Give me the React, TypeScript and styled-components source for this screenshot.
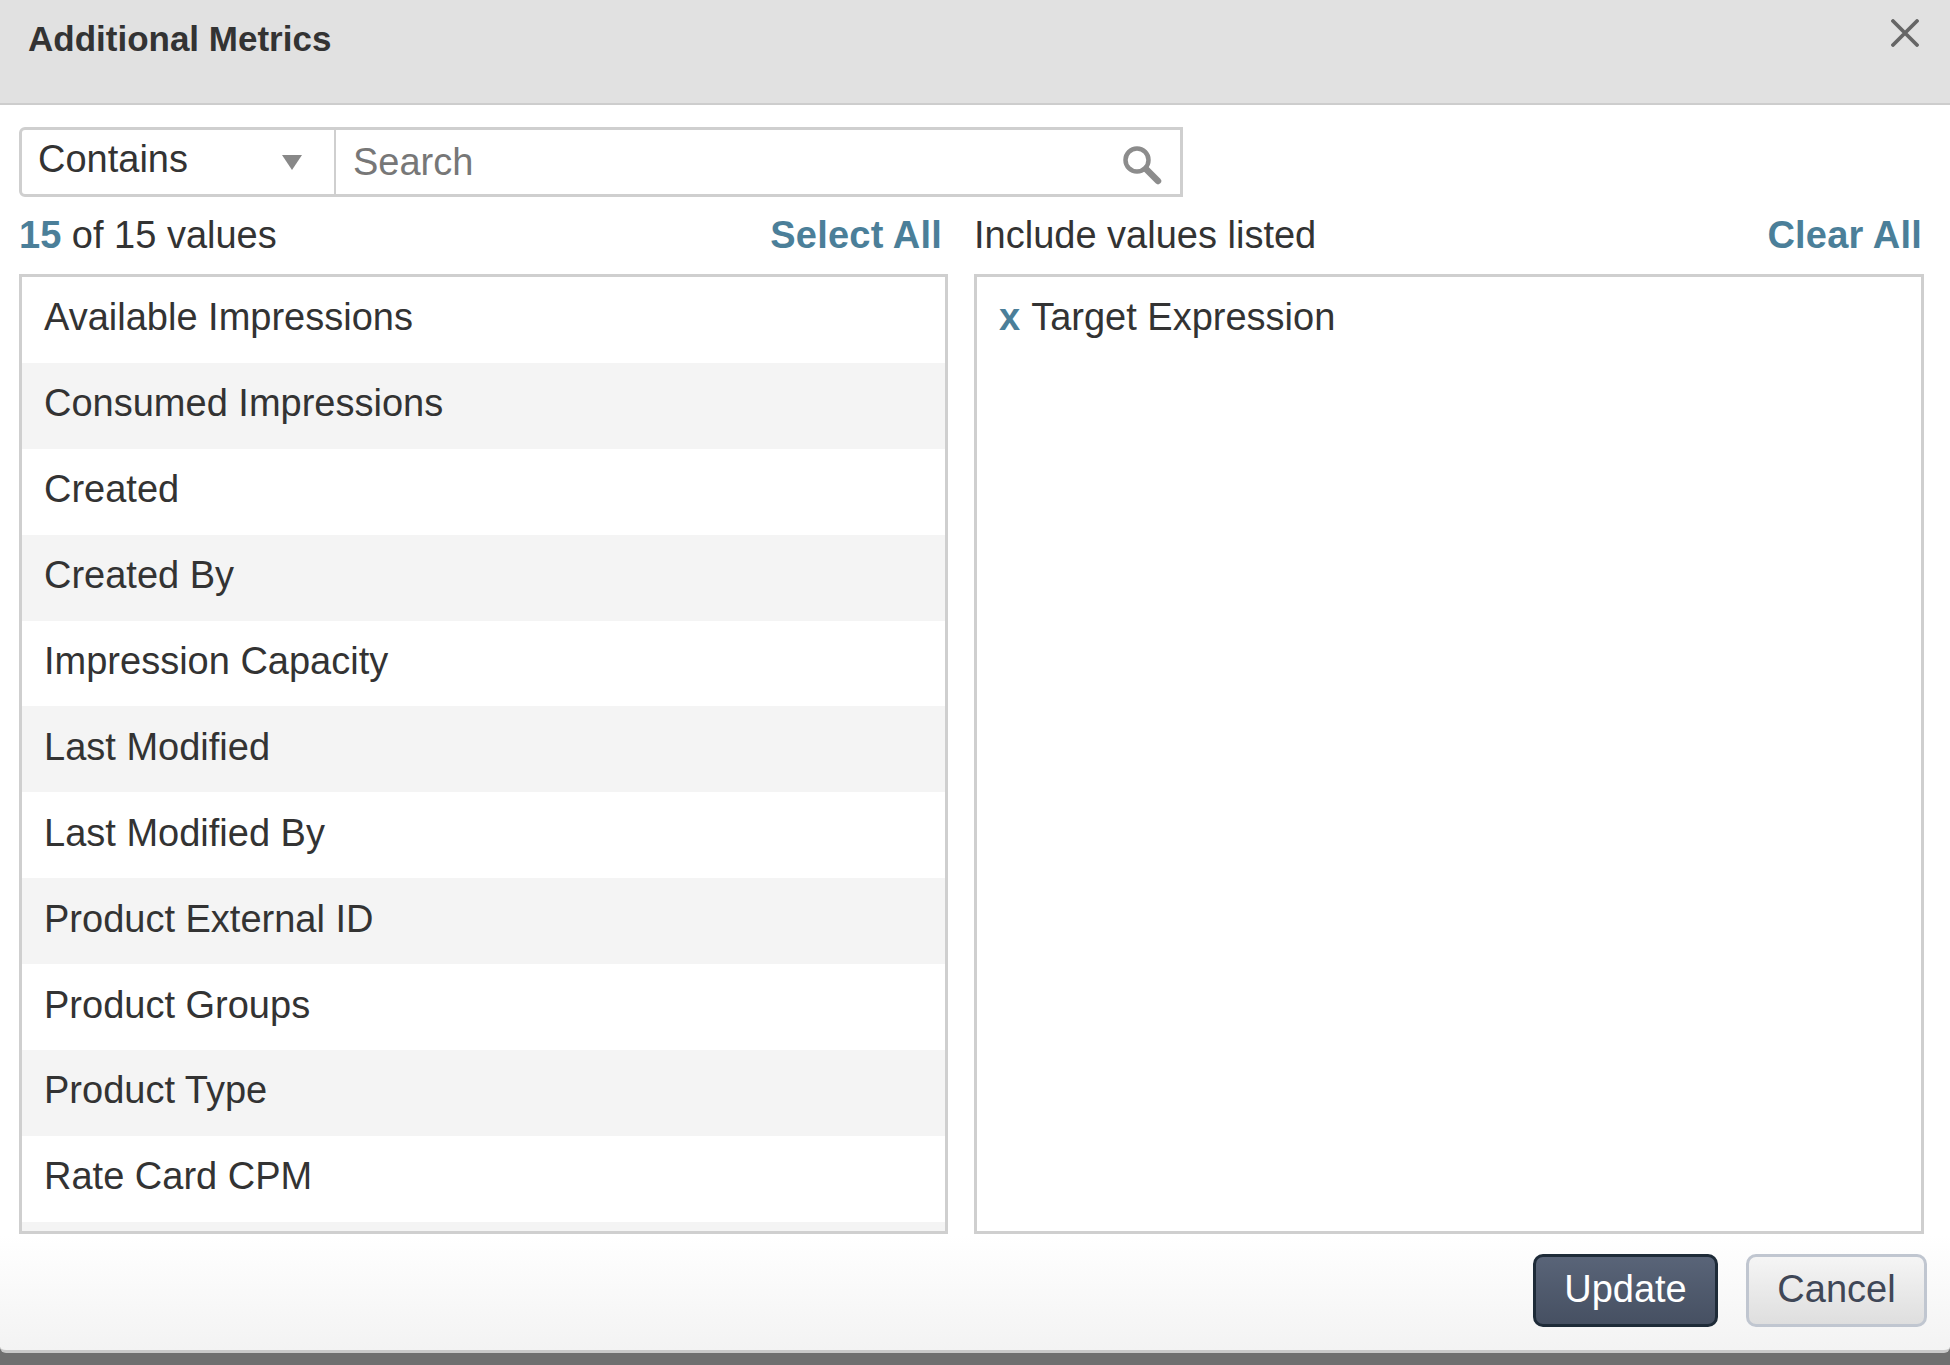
import React from 'react';
import styled, { createGlobalStyle } from 'styled-components';

const LEFT_VALUES = [
  'Available Impressions',
  'Consumed Impressions',
  'Created',
  'Created By',
  'Impression Capacity',
  'Last Modified',
  'Last Modified By',
  'Product External ID',
  'Product Groups',
  'Product Type',
  'Rate Card CPM',
  '',
];

const BLUE = '#4b7f99';
const TEXT = '#333';
const LINE = '#cfcfcf';

const GlobalStyle = createGlobalStyle`
  html, body {
    margin: 0;
    padding: 0;
    background: #6f6f6f;
  }
  body {
    height: 1365px;
    overflow: hidden;
    font-family: "Liberation Sans", Arial, sans-serif;
    color: ${TEXT};
  }
`;

const Dialog = styled.div`
  height: 1353px;
  box-sizing: border-box;
  display: flex;
  flex-direction: column;
  background: linear-gradient(#fff 1235px, #f3f3f3 1350px);
  border-bottom: 3px solid #c9c9c9;
  border-radius: 0 0 6px 6px;
`;

const Header = styled.div`
  height: 105px;
  box-sizing: border-box;
  flex: none;
  display: flex;
  justify-content: space-between;
  align-items: flex-start;
  padding: 19px 31px 0 28px;
  background: #e1e1e1;
  border-bottom: 2px solid #cdcdcd;
`;

const Title = styled.h1`
  margin: 0;
  font-size: 35px;
  line-height: 40px;
  font-weight: 700;
`;

const CloseIcon = styled.svg`
  width: 28px;
  height: 28px;
`;

const Body = styled.div`
  flex: 1;
  display: flex;
  flex-direction: column;
  padding: 22px 23px 0 19px;
`;

const SearchBar = styled.div`
  width: 1164px;
  height: 70px;
  box-sizing: border-box;
  display: flex;
  border: 3px solid ${LINE};
  border-radius: 6px 0 0 6px;
`;

const MatchSelect = styled.div`
  width: 314px;
  flex: none;
  box-sizing: border-box;
  display: flex;
  align-items: center;
  justify-content: space-between;
  padding: 0 32px 6px 16px;
  font-size: 38px;
  border-right: 2px solid ${LINE};
`;

const Caret = styled.span`
  width: 0;
  height: 0;
  margin-top: 6px;
  border-left: 10px solid transparent;
  border-right: 10px solid transparent;
  border-top: 15px solid #888;
`;

const SearchField = styled.div`
  flex: 1;
  display: flex;
  align-items: center;
  justify-content: space-between;
  padding: 0 17px;
  font-size: 38px;
  color: #777;
`;

const SearchIcon = styled.svg`
  width: 42px;
  height: 42px;
  margin-top: 5px;
`;

const Columns = styled.div`
  display: grid;
  grid-template-columns: 929px 950px;
  column-gap: 26px;
  margin-top: 12px;
`;

const Column = styled.div`
  display: flex;
  flex-direction: column;
`;

const ColumnHead = styled.div<{ $inset: number }>`
  height: 52px;
  display: flex;
  align-items: center;
  justify-content: space-between;
  padding-right: ${({ $inset }) => $inset}px;
  margin-bottom: 13px;
  font-size: 38px;
  white-space: nowrap;
`;

const Count = styled.strong`
  color: ${BLUE};
`;

const HeadLink = styled.a`
  color: ${BLUE};
  font-weight: 700;
  letter-spacing: 0.2px;
`;

const ListBox = styled.div`
  height: 960px;
  box-sizing: border-box;
  border: 3px solid ${LINE};
  overflow: hidden;
`;

const Row = styled.div<{ $odd: boolean }>`
  height: 85.9px;
  box-sizing: border-box;
  display: flex;
  align-items: center;
  padding: 0 22px 4px 22px;
  font-size: 38px;
  background: ${({ $odd }) => ($odd ? '#f4f4f4' : '#fff')};
`;

const Remove = styled.b`
  color: ${BLUE};
  margin-right: 11px;
`;

const Footer = styled.div`
  display: flex;
  justify-content: flex-end;
  gap: 28px;
  margin-top: 20px;
`;

const Button = styled.button<{ $primary?: boolean }>`
  height: 73px;
  box-sizing: border-box;
  padding: 0 0 2px;
  width: ${({ $primary }) => ($primary ? '185px' : '181px')};
  font: 38px "Liberation Sans", Arial, sans-serif;
  border-radius: 10px;
  border: 3px solid ${({ $primary }) => ($primary ? '#1e2b38' : '#c0c6d0')};
  color: ${({ $primary }) => ($primary ? '#fff' : '#3f4757')};
  background: ${({ $primary }) =>
    $primary ? 'linear-gradient(#596478, #465062)' : 'linear-gradient(#f5f5f5, #dedede)'};
`;

export default function App() {
  return (
    <>
      <GlobalStyle />
      <Dialog>
        <Header>
          <Title>Additional Metrics</Title>
          <CloseIcon viewBox="0 0 28 28" fill="none" stroke="#666" strokeWidth="3.8" strokeLinecap="round">
            <path d="M2 2 L26 26 M26 2 L2 26" />
          </CloseIcon>
        </Header>
        <Body>
          <SearchBar>
            <MatchSelect>
              Contains
              <Caret />
            </MatchSelect>
            <SearchField>
              Search
              <SearchIcon viewBox="0 0 42 42" fill="none" stroke="#8c8c8c" strokeLinecap="round">
                <circle cx="16" cy="16" r="11.5" strokeWidth="4.5" />
                <path d="M25 25 L37 37" strokeWidth="6.5" />
              </SearchIcon>
            </SearchField>
          </SearchBar>
          <Columns>
            <Column>
              <ColumnHead $inset={6}>
                <span>
                  <Count>15</Count> of 15 values
                </span>
                <HeadLink>Select All</HeadLink>
              </ColumnHead>
              <ListBox>
                {LEFT_VALUES.map((value, i) => (
                  <Row key={i} $odd={i % 2 === 1}>
                    {value}
                  </Row>
                ))}
              </ListBox>
            </Column>
            <Column>
              <ColumnHead $inset={2}>
                <span>Include values listed</span>
                <HeadLink>Clear All</HeadLink>
              </ColumnHead>
              <ListBox>
                <Row $odd={false}>
                  <Remove>x</Remove>
                  Target Expression
                </Row>
              </ListBox>
            </Column>
          </Columns>
          <Footer>
            <Button $primary>Update</Button>
            <Button>Cancel</Button>
          </Footer>
        </Body>
      </Dialog>
    </>
  );
}
